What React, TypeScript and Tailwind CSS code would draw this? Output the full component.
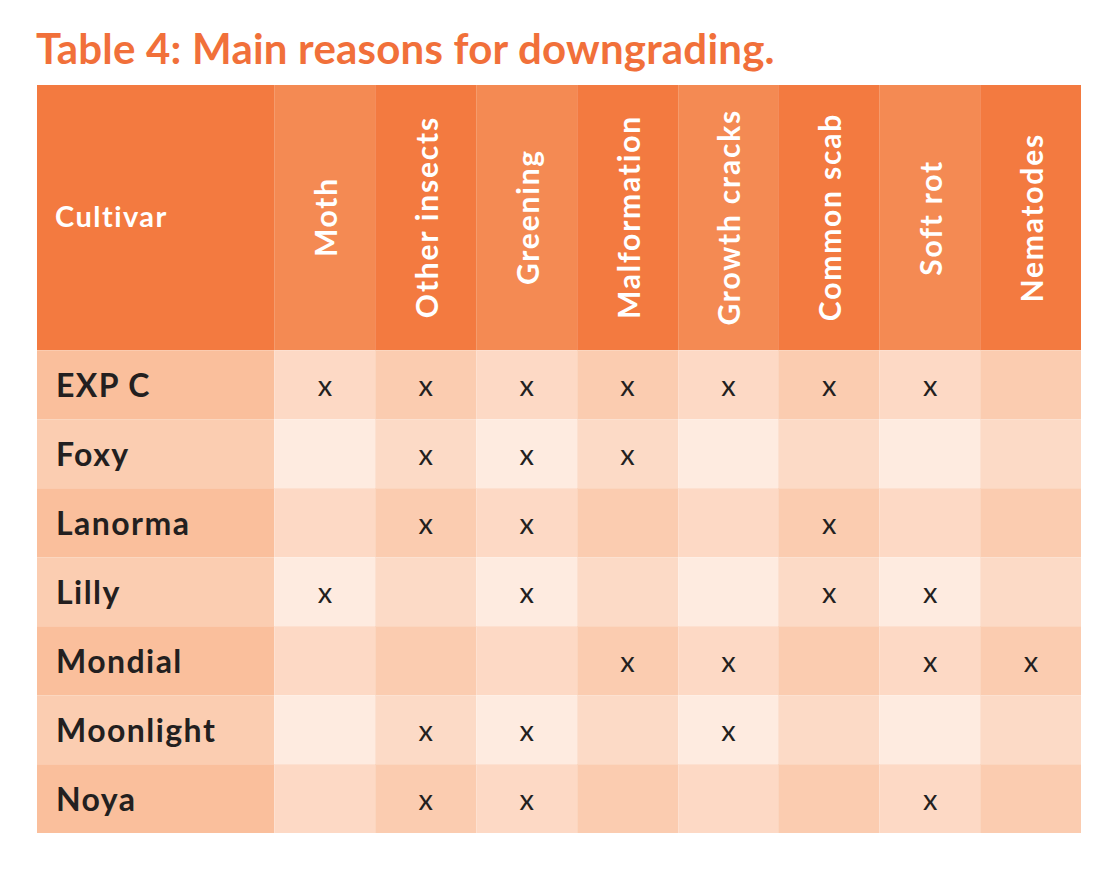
import React from 'react';

const columns = [
  'Moth',
  'Other insects',
  'Greening',
  'Malformation',
  'Growth cracks',
  'Common scab',
  'Soft rot',
  'Nematodes',
];

// 1 = marked with an x
const rows: { name: string; marks: number[] }[] = [
  { name: 'EXP C', marks: [1, 1, 1, 1, 1, 1, 1, 0] },
  { name: 'Foxy', marks: [0, 1, 1, 1, 0, 0, 0, 0] },
  { name: 'Lanorma', marks: [0, 1, 1, 0, 0, 1, 0, 0] },
  { name: 'Lilly', marks: [1, 0, 1, 0, 0, 1, 1, 0] },
  { name: 'Mondial', marks: [0, 0, 0, 1, 1, 0, 1, 1] },
  { name: 'Moonlight', marks: [0, 1, 1, 0, 1, 0, 0, 0] },
  { name: 'Noya', marks: [0, 1, 1, 0, 0, 0, 1, 0] },
];

function cellColor(row: number, col: number) {
  const oddRow = row % 2 === 0;
  const lightCol = col % 2 === 0;
  if (oddRow) return lightCol ? 'bg-[#FDD9C5]' : 'bg-[#FBCCB0]';
  return lightCol ? 'bg-[#FEEBE0]' : 'bg-[#FCDAC6]';
}

export default function App() {
  return (
    <div className="w-[1112px] h-[876px] bg-white font-['Lato',sans-serif]">
      {/* Title */}
      <div className="pl-[36px] pt-[24px] h-[85px]">
        <h1 className="text-[42px] leading-[48px] font-bold tracking-[0.005em] text-[#F1703A]">
          Table 4: Main reasons for downgrading.
        </h1>
      </div>

      {/* Table */}
      <div className="ml-[37px] w-[1044px] grid grid-cols-[237px_repeat(8,1fr)]">
        {/* Header */}
        <div className="h-[265px] bg-[#F37A40] flex items-center pl-[18px] pb-[3px]">
          <span className="text-[29px] font-bold tracking-[0.05em] text-white">Cultivar</span>
        </div>
        {columns.map((c, i) => (
          <div
            key={c}
            className={`h-[265px] flex items-center justify-center border-l border-white/15 ${
              i % 2 === 0 ? 'bg-[#F48A53]' : 'bg-[#F37A40]'
            }`}
          >
            <span className="[writing-mode:vertical-rl] rotate-180 text-[30px] leading-none font-bold tracking-[0.06em] text-white whitespace-nowrap">
              {c}
            </span>
          </div>
        ))}

        {/* Body */}
        {rows.map((r, ri) => (
          <React.Fragment key={r.name}>
            <div
              className={`h-[69px] flex items-center pl-[19px] border-t border-white/20 ${
                ri % 2 === 0 ? 'bg-[#FABF9C]' : 'bg-[#FBCDB1]'
              }`}
            >
              <span className="text-[32px] font-bold tracking-[0.045em] text-[#231F20]">{r.name}</span>
            </div>
            {r.marks.map((m, ci) => (
              <div
                key={ci}
                className={`h-[69px] flex items-center justify-center border-t border-l border-white/20 ${cellColor(ri, ci)}`}
              >
                {m ? (
                  <span className="text-[29px] leading-none text-[#231F20] pb-[2px]">x</span>
                ) : null}
              </div>
            ))}
          </React.Fragment>
        ))}
      </div>
    </div>
  );
}
